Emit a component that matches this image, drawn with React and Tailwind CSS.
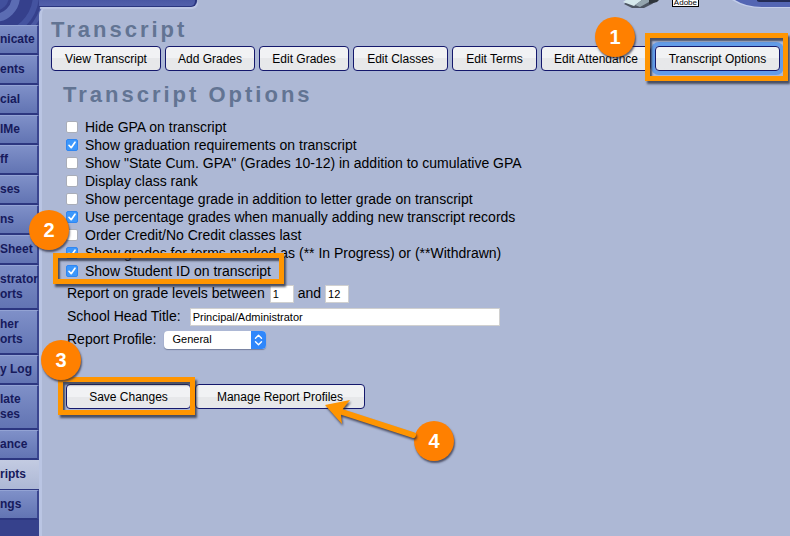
import { useState } from 'react';

const navItems = [
  { lines: ['nicate'] },
  { lines: ['ents'] },
  { lines: ['cial'] },
  { lines: ['lMe'] },
  { lines: ['ff'] },
  { lines: ['ses'] },
  { lines: ['ns'] },
  { lines: ['Sheet'] },
  { lines: ['strator', 'orts'] },
  { lines: ['her', 'orts'] },
  { lines: ['y Log'] },
  { lines: ['late', 'ses'] },
  { lines: ['ance'] },
  { lines: ['ripts'], active: true },
  { lines: ['ngs'] },
];

const initialOptions = [
  { id: 'hideGpa', label: 'Hide GPA on transcript', checked: false },
  { id: 'gradReq', label: 'Show graduation requirements on transcript', checked: true },
  { id: 'stateGpa', label: 'Show "State Cum. GPA" (Grades 10-12) in addition to cumulative GPA', checked: false },
  { id: 'classRank', label: 'Display class rank', checked: false },
  { id: 'showPct', label: 'Show percentage grade in addition to letter grade on transcript', checked: false },
  { id: 'usePct', label: 'Use percentage grades when manually adding new transcript records', checked: true },
  { id: 'creditLast', label: 'Order Credit/No Credit classes last', checked: false, badge: '2' },
  { id: 'inProgress', label: 'Show grades for terms marked as (** In Progress) or (**Withdrawn)', checked: true },
  { id: 'studentId', label: 'Show Student ID on transcript', checked: true, highlight: true },
];

function Button({ children, className = '' }) {
  return (
    <button type="button" className={`block h-[25px] shrink-0 whitespace-nowrap rounded-[4px] border border-[#14186c] bg-linear-to-b from-[#f1f2f4] from-50% to-[#e7e8ea] to-50% text-center text-[12px] leading-4 text-black ${className}`}>
      {children}
    </button>
  );
}

function Badge({ children, className = '' }) {
  return (
    <span className={`absolute z-20 flex size-10 items-center justify-center rounded-full bg-[#ff8000] text-[20px] font-bold text-white shadow-[1px_2px_2px_rgba(40,40,60,0.7)] ${className}`}>
      {children}
    </span>
  );
}

// orange outline with the dark drop shadow both inside and outside
function Callout({ className = '' }) {
  return (
    <span className={`pointer-events-none absolute z-10 border-5 border-[#ff9500] shadow-[2px_3px_2px_rgba(40,44,60,0.75),inset_2px_3px_2px_rgba(40,44,60,0.75)] ${className}`} />
  );
}

function Option({ option, onToggle }) {
  return (
    <div className="relative flex h-[18px] w-fit items-center">
      <span className="relative flex size-[12px]">
        <input
          id={option.id}
          type="checkbox"
          checked={option.checked}
          onChange={() => onToggle(option.id)}
          className="size-[12px] appearance-none rounded-[2px] border border-[#a9adb8] bg-white checked:border-[#2f86f2] checked:bg-[#3c97fb]"
        />
        {option.checked && (
          <svg viewBox="0 0 12 12" className="pointer-events-none absolute inset-0 size-[12px]" fill="none" stroke="white" strokeWidth="1.7" strokeLinecap="round" strokeLinejoin="round">
            <path d="M3 6.3 5.2 8.7 9 3.2" />
          </svg>
        )}
      </span>
      <label htmlFor={option.id} className="pl-[7px] whitespace-nowrap">{option.label}</label>
      {option.badge && <Badge className="-top-4 -left-[37px]">{option.badge}</Badge>}
      {option.highlight && <Callout className="-top-[9px] -right-[13px] -bottom-1 -left-[13px]" />}
    </div>
  );
}

function Logo() {
  return (
    <svg className="absolute top-0 left-0 h-[40px] w-[60px]" viewBox="0 0 60 40" fill="none">
      <rect width="60" height="40" fill="#35408c" />
      <circle cx="-6" cy="-6" r="50" stroke="#4a58a2" strokeWidth="4" />
      <circle cx="-6" cy="-6" r="42" stroke="#4453a0" strokeWidth="6" />
      <circle cx="-6" cy="-4" r="22" stroke="#5b6cb3" strokeWidth="8" />
      <circle cx="-6" cy="-4" r="15" fill="#41509d" />
    </svg>
  );
}

function Sidebar() {
  return (
    <nav className="relative z-10 w-[39px] shrink-0 overflow-hidden pt-[25px] text-[12px] leading-[15px] font-bold text-[#161a5c]">
      {navItems.map((item, i) => (
        <a
          key={i}
          href="#"
          className={
            item.active
              ? 'block border-b border-[#2c3680] bg-linear-to-b from-[#c3cbe2] to-[#adb8d5] py-[7px] whitespace-nowrap'
              : 'block border-t border-r-2 border-b-2 border-t-[#93a3d4] border-r-[#3a458f] border-b-[#2c3680] bg-linear-to-b from-[#7f90c8] to-[#6274b3] py-[6px] whitespace-nowrap'
          }
        >
          {item.lines.map((line, j) => (
            <span key={j} className="block">{line}</span>
          ))}
        </a>
      ))}
    </nav>
  );
}

function Header() {
  return (
    <header className="relative z-10 flex h-[7px] shrink-0">
      <div className="w-[158px] rounded-br-[6px] border-r-2 border-b border-[#2a357f] bg-linear-to-b from-[#4a58a4] to-[#5260ab] shadow-[1px_2px_1px_#bfc9e6]" />
      <div className="relative flex-1">
        <svg className="absolute top-0 right-[128px] h-[8px] w-[40px]" viewBox="0 0 40 8">
          <path d="M2 4 10 8h12l8-4 6-4H8z" fill="#4c5462" />
          <path d="M1 2 12 6l8-6H4z" fill="#d5e8ec" />
          <path d="M13 5 18 7l9-5V0h-7z" fill="#93a4ae" />
          <path d="M27 0v4l8-2 2-2z" fill="#2f353c" />
        </svg>
        <span className="absolute top-0 right-[91px] border border-t-0 border-black bg-white px-px text-[8px] leading-[6px]">Adobe</span>
        <svg className="absolute top-0 right-0 h-[9px] w-[60px]" viewBox="0 0 60 9">
          <path d="M2 0Q14 8 32 8H60V0z" fill="#c3cdea" />
          <path d="M5 0Q16 7 32 7H60V0z" fill="#5365b3" />
          <path d="M27 0v1q1 1 3 1h30V0z" fill="#232b55" />
        </svg>
      </div>
    </header>
  );
}

export default function App() {
  const [options, setOptions] = useState(initialOptions);
  const [from, setFrom] = useState('1');
  const [to, setTo] = useState('12');
  const [headTitle, setHeadTitle] = useState('Principal/Administrator');

  const toggle = (id) => setOptions(options.map((o) => (o.id === id ? { ...o, checked: !o.checked } : o)));

  return (
    <div className="relative flex min-h-screen overflow-hidden bg-[#36418c] font-['Liberation_Sans',Arial,sans-serif] text-[14px] text-black">
      <Logo />
      <Sidebar />
      <div className="relative z-20 flex min-w-0 flex-1 flex-col">
        <div className="absolute top-0 right-0 left-[150px] h-[10px] bg-[#adb8d5]" />
        <Header />
        <main className="relative flex-1 rounded-tl-[8px] border-l-3 border-[#bac5e3] bg-[#adb8d5] pt-[9px] pl-[9px]">
          <h1 className="text-[22px] leading-7 font-bold tracking-[3px] text-[#627493]">Transcript</h1>
          <div className="mt-[2px] flex gap-1">
            <Button className="w-[110px]">View Transcript</Button>
            <Button className="w-[90px]">Add Grades</Button>
            <Button className="w-[90px]">Edit Grades</Button>
            <Button className="w-[95px]">Edit Classes</Button>
            <Button className="w-[85px]">Edit Terms</Button>
            <div className="relative">
              <Button className="w-[110px]">Edit Attendance</Button>
              <Badge className="-top-[29px] left-[54px]">1</Badge>
            </div>
            <div className="relative">
              <Button className="w-[125px] ring-4 ring-[#639ce8]">Transcript Options</Button>
              <Callout className="-top-[13px] -right-2 -bottom-[10px] -left-[10px]" />
            </div>
          </div>

          <section className="pl-3">
            <h2 className="mt-[10px] text-[22px] leading-7 font-bold tracking-[3px] text-[#627493]">Transcript Options</h2>
            <form className="pl-[3px]" onSubmit={(e) => e.preventDefault()}>
              <div className="mt-[9px]">
                {options.map((option) => (
                  <Option key={option.id} option={option} onToggle={toggle} />
                ))}
              </div>
              <div className="mt-[2px] flex h-[23px] items-center pl-px">
                <label htmlFor="gradeFrom">Report on grade levels between</label>
                <input id="gradeFrom" value={from} onChange={(e) => setFrom(e.target.value)} className="mr-1 ml-[5px] h-[18px] w-6 border border-[#d0d0d0] bg-white px-[2px] text-[11px]" />
                <label htmlFor="gradeTo">and</label>
                <input id="gradeTo" value={to} onChange={(e) => setTo(e.target.value)} className="ml-1 h-[18px] w-6 border border-[#d0d0d0] bg-white px-[2px] text-[11px]" />
              </div>
              <div className="flex h-[23px] items-center pl-px">
                <label htmlFor="headTitle">School Head Title:</label>
                <input id="headTitle" value={headTitle} onChange={(e) => setHeadTitle(e.target.value)} className="ml-[9px] h-[18px] w-[310px] border border-[#d0d0d0] bg-white px-[2px] text-[11px]" />
              </div>
              <div className="flex h-[23px] items-center pl-px">
                <label htmlFor="profile">Report Profile:</label>
                <span className="relative ml-2 flex">
                  <select id="profile" className="h-[18px] w-[102px] appearance-none rounded-[4px] bg-white pl-2 text-[11px] shadow-[0_1px_1px_rgba(60,70,100,0.5)]">
                    <option>General</option>
                  </select>
                  <svg viewBox="0 0 15 18" className="pointer-events-none absolute top-0 right-0 h-[18px] w-[15px]" fill="none">
                    <path d="M0 0h11a4 4 0 0 1 4 4v10a4 4 0 0 1-4 4H0z" fill="#2f87fb" />
                    <path d="M4.5 7.2 7.5 4.2l3 3M4.5 10.8l3 3 3-3" stroke="white" strokeWidth="1.4" strokeLinecap="round" strokeLinejoin="round" />
                  </svg>
                </span>
              </div>
              <div className="mt-[33px] flex gap-1">
                <div className="relative">
                  <Button className="w-[125px]">Save Changes</Button>
                  <Callout className="-top-[7px] -right-1 -bottom-[6px] -left-2" />
                  <Badge className="-top-11 -left-[25px]">3</Badge>
                </div>
                <div className="relative">
                  <Button className="w-[170px]">Manage Report Profiles</Button>
                  <svg className="pointer-events-none absolute top-[14px] left-[125px] z-30 h-[50px] w-[105px] drop-shadow-[1px_2px_1px_rgba(40,40,60,0.8)]" viewBox="0 0 105 50" fill="none">
                    <path d="M19 13 93 37" stroke="#ff9500" strokeWidth="6" strokeLinecap="round" />
                    <path d="M5 7 30 2 22 12 21 17 22 26z" fill="#ff9500" />
                  </svg>
                  <Badge className="top-[37px] left-[219px]">4</Badge>
                </div>
              </div>
            </form>
          </section>
        </main>
      </div>
    </div>
  );
}
